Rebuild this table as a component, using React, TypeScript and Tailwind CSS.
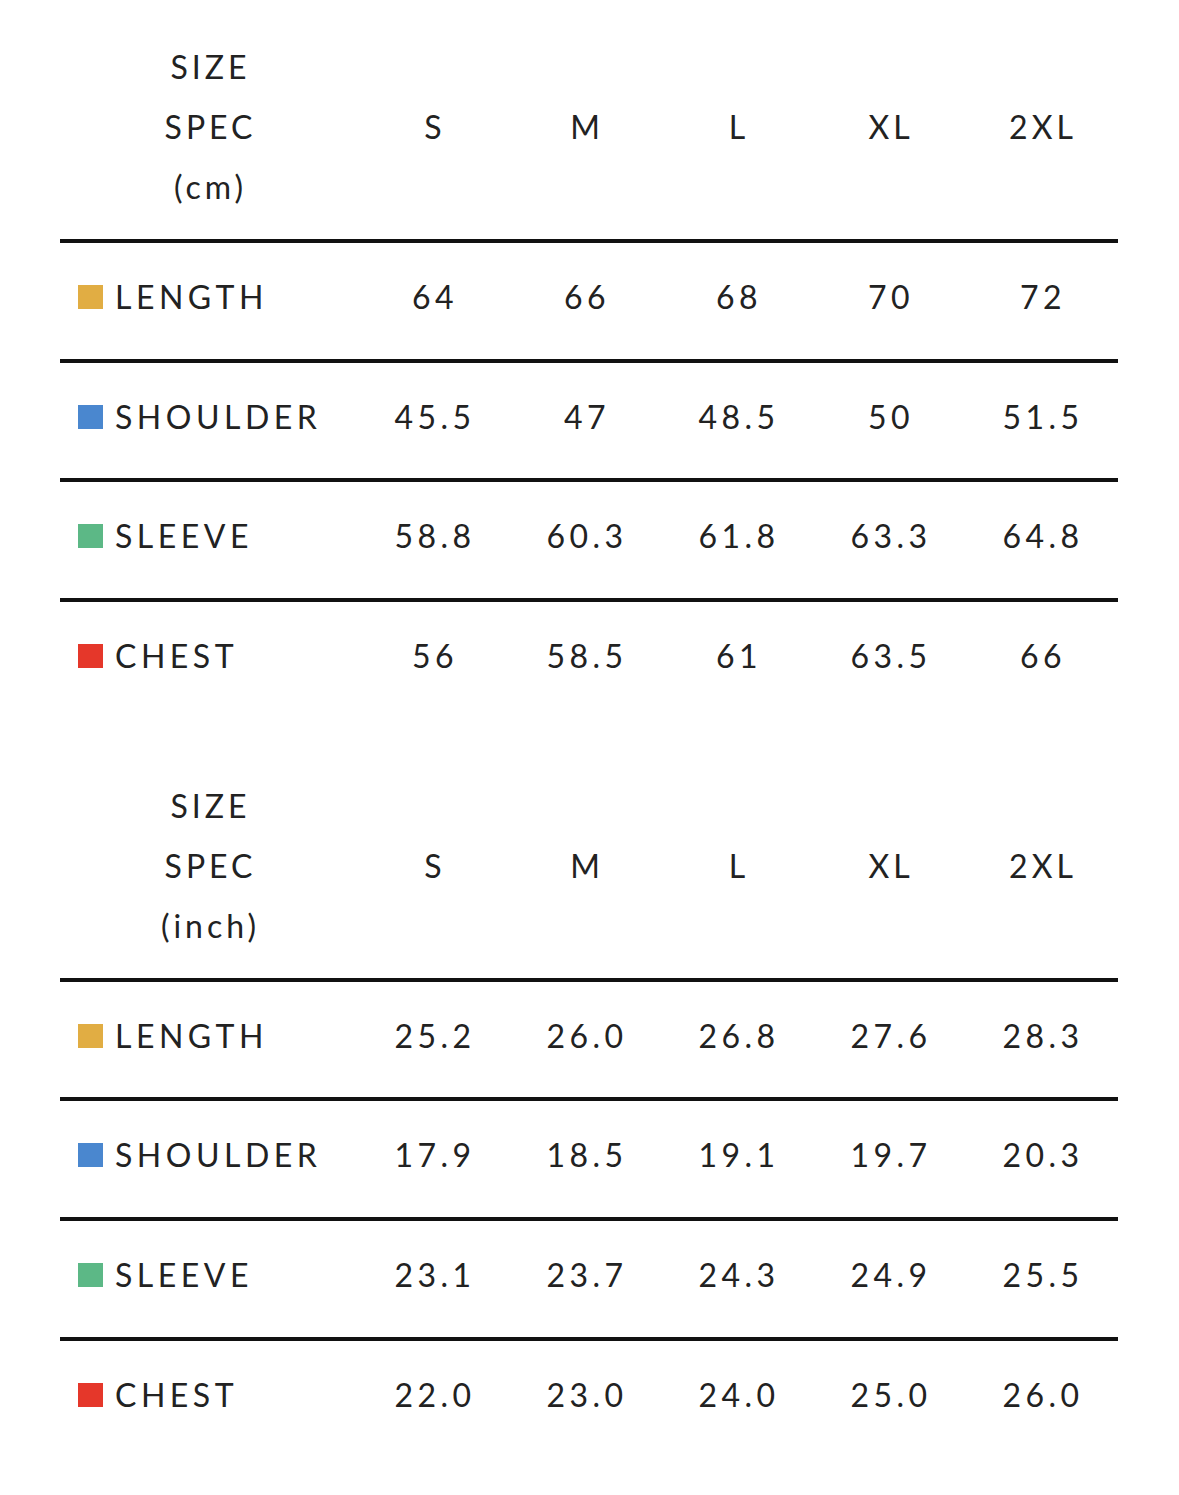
const SIZES = ['S', 'M', 'L', 'XL', '2XL'];

type Row = { label: string; color: string; values: string[] };

const CM_ROWS: Row[] = [
  { label: 'LENGTH', color: 'bg-[#e1ad43]', values: ['64', '66', '68', '70', '72'] },
  { label: 'SHOULDER', color: 'bg-[#4a87cf]', values: ['45.5', '47', '48.5', '50', '51.5'] },
  { label: 'SLEEVE', color: 'bg-[#5cb886]', values: ['58.8', '60.3', '61.8', '63.3', '64.8'] },
  { label: 'CHEST', color: 'bg-[#e5372a]', values: ['56', '58.5', '61', '63.5', '66'] },
];

const INCH_ROWS: Row[] = [
  { label: 'LENGTH', color: 'bg-[#e1ad43]', values: ['25.2', '26.0', '26.8', '27.6', '28.3'] },
  { label: 'SHOULDER', color: 'bg-[#4a87cf]', values: ['17.9', '18.5', '19.1', '19.7', '20.3'] },
  { label: 'SLEEVE', color: 'bg-[#5cb886]', values: ['23.1', '23.7', '24.3', '24.9', '25.5'] },
  { label: 'CHEST', color: 'bg-[#e5372a]', values: ['22.0', '23.0', '24.0', '25.0', '26.0'] },
];

function SpecTable({ unit, rows }: { unit: string; rows: Row[] }) {
  return (
    <div className="w-[1058px]">
      <div className="grid grid-cols-[297px_repeat(5,152px)] items-center text-[32px] leading-[60px] tracking-[4px]">
        <div className="flex flex-col items-center pl-[4px]">
          <span>SIZE</span>
          <span>SPEC</span>
          <span>({unit})</span>
        </div>
        {SIZES.map((s) => (
          <div key={s} className="text-center pl-[4px]">{s}</div>
        ))}
      </div>
      <div className="mt-[22px]">
        {rows.map((r) => (
          <div
            key={r.label}
            className="grid grid-cols-[297px_repeat(5,152px)] items-center h-[119.7px] pb-[8px] border-t-4 border-[#111] text-[32px] tracking-[4.5px]"
          >
            <div className="flex items-center pl-[18px] gap-[12px]">
              <span className={`w-[25px] h-[24px] ${r.color}`} />
              <span>{r.label}</span>
            </div>
            {r.values.map((v, j) => (
              <div key={j} className="text-center pl-[4px]">{v}</div>
            ))}
          </div>
        ))}
      </div>
    </div>
  );
}

export default function App() {
  return (
    <div className="w-[1179px] h-[1495px] bg-white text-[#222] font-['Lato',sans-serif] pl-[60px] pt-[37px] flex flex-col gap-[58px]">
      <SpecTable unit="cm" rows={CM_ROWS} />
      <SpecTable unit="inch" rows={INCH_ROWS} />
    </div>
  );
}
